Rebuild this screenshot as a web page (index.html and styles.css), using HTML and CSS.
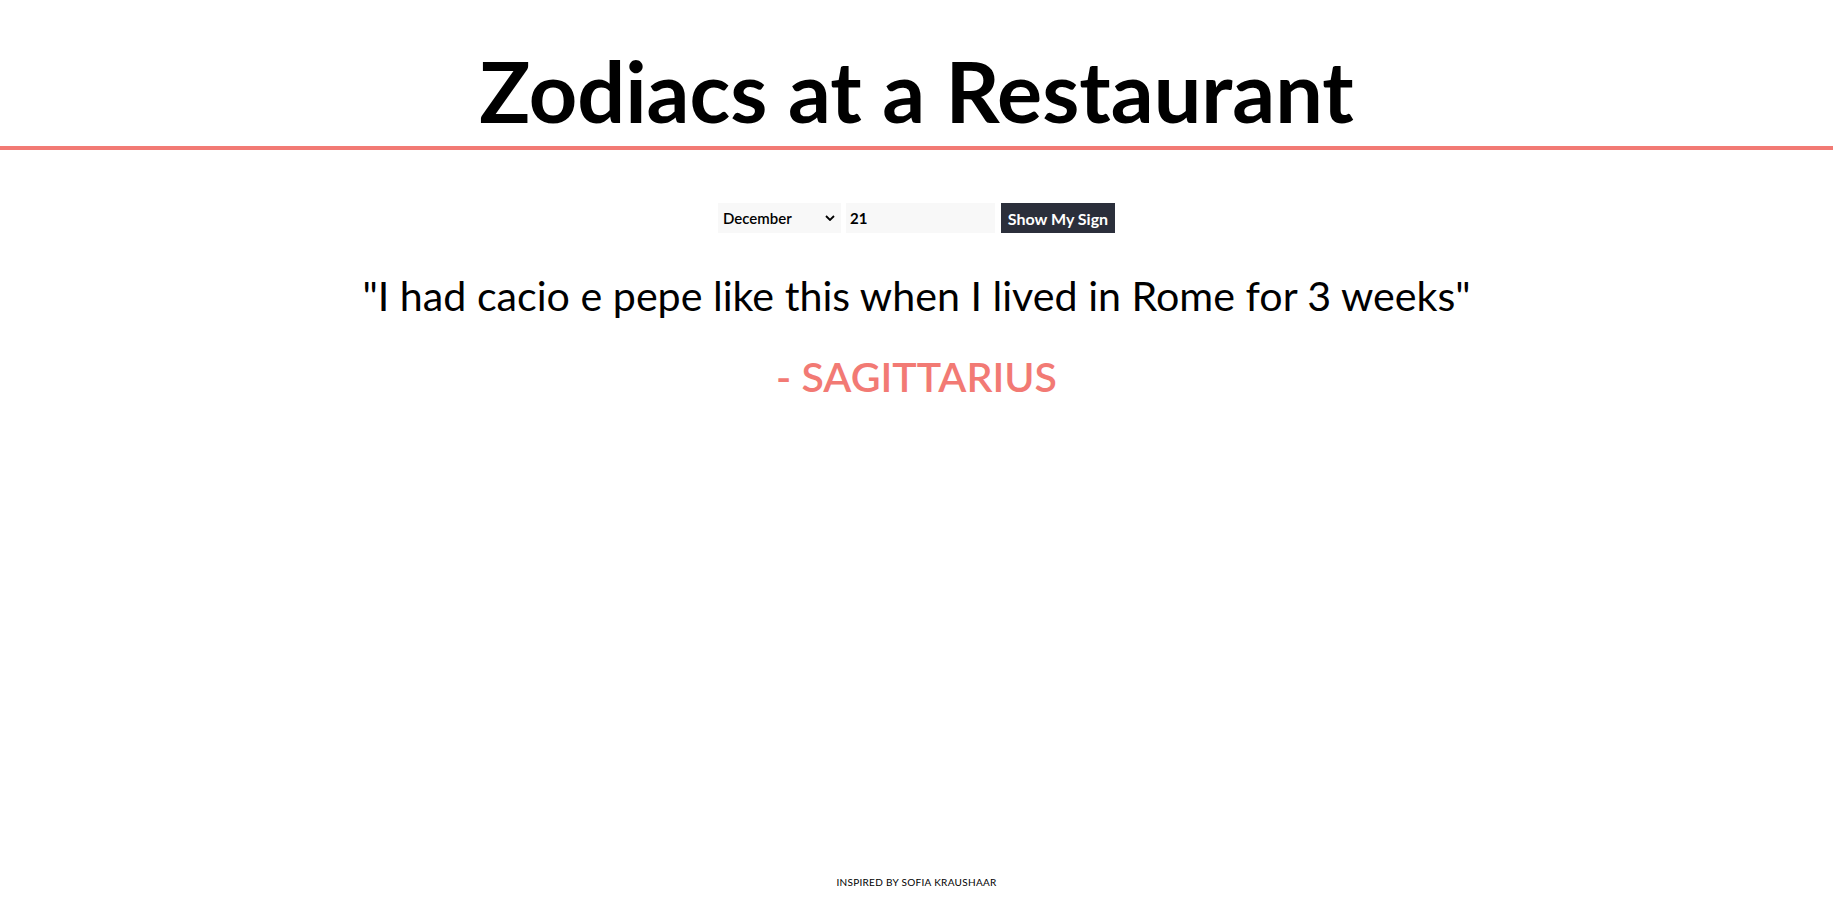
FILE: index.html
```html
<!DOCTYPE html>
<html lang="en">
<head>
<meta charset="utf-8">
<title>Zodiacs at a Restaurant</title>
<link rel="stylesheet" href="styles.css">
</head>
<body>
<div class="page">
  <header class="header">
    <h1 class="title">Zodiacs at a Restaurant</h1>
  </header>
  <main class="main">
    <form class="sign-form">
      <div class="select-wrap">
        <select class="month">
          <option>December</option>
        </select>
        <svg class="chev" viewBox="0 0 10 6" width="10" height="6"><path d="M1 1 L5 5 L9 1" fill="none" stroke="#000" stroke-width="1.8"/></svg>
      </div>
      <input class="day" type="text" value="21">
      <button class="btn" type="button">Show My Sign</button>
    </form>
    <p class="quote">"I had cacio e pepe like this when I lived in Rome for 3 weeks"</p>
    <p class="sign">- SAGITTARIUS</p>
  </main>
  <footer class="footer">INSPIRED BY SOFIA KRAUSHAAR</footer>
</div>
</body>
</html>
```
FILE: styles.css
```css
* { box-sizing: border-box; }
html, body { margin: 0; padding: 0; background: #fff; }
body { font-family: "Lato", "Open Sans", sans-serif; color: #000; }
.page { min-height: 100vh; display: flex; flex-direction: column; }
.header { border-bottom: 4px solid #f27a74; display: flex; justify-content: center; padding-top: 47px; padding-bottom: 11px; }
.title { margin: 0; font-size: 84.5px; font-weight: 700; line-height: 88px; letter-spacing: 0; }
.main { display: flex; flex-direction: column; align-items: center; padding-top: 53px; }
.sign-form { display: flex; gap: 5px; height: 30px; }
.select-wrap { position: relative; width: 123px; height: 30px; }
.month { appearance: none; -webkit-appearance: none; width: 100%; height: 100%; border: none; background: #f8f8f8; font-family: inherit; font-size: 15px; font-weight: 600; padding: 0 0 0 5px; color: #000; border-radius: 0; }
.chev { position: absolute; right: 6px; top: 12px; pointer-events: none; }
.day { width: 149px; height: 30px; border: none; background: #f8f8f8; font-family: inherit; font-size: 15px; font-weight: 700; padding: 0 4px; }
.btn { width: 114px; height: 30px; border: none; background: #2b2f3b; color: #fff; font-family: inherit; font-size: 16px; font-weight: 700; padding: 0; margin-left: 1px; }
.quote { margin: 40px 0 0; font-size: 41.2px; line-height: 44px; text-align: center; }
.sign { margin: 38px 0 0; font-size: 41px; line-height: 44px; color: #f27a74; text-align: center; font-weight: 600; }
.footer { margin-top: auto; text-align: center; font-size: 10px; letter-spacing: 0.3px; padding-bottom: 18px; }
```
